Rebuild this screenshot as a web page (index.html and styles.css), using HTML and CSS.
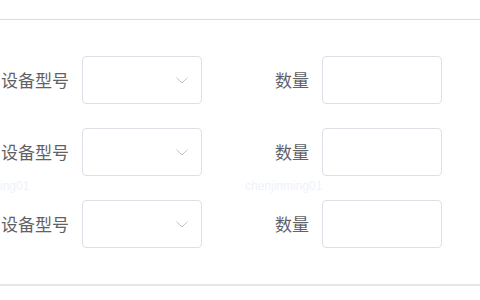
FILE: index.html
```html
<!DOCTYPE html>
<html lang="zh">
<head>
<meta charset="utf-8">
<link rel="stylesheet" href="styles.css">
</head>
<body>
<div class="page">
  <div class="header"></div>
  <div class="form">
    <div class="row">
      <div class="item"><label class="label">设备型号</label><div class="select"><svg class="arrow" width="12" height="7" viewBox="0 0 12 7"><path d="M0.5 0.5 L6 6 L11.5 0.5" fill="none" stroke="#c0c4cc" stroke-width="1"/></svg></div></div>
      <div class="item"><label class="label">数量</label><div class="input"></div></div>
    </div>
    <div class="row">
      <div class="item"><label class="label">设备型号</label><div class="select"><svg class="arrow" width="12" height="7" viewBox="0 0 12 7"><path d="M0.5 0.5 L6 6 L11.5 0.5" fill="none" stroke="#c0c4cc" stroke-width="1"/></svg></div></div>
      <div class="item"><label class="label">数量</label><div class="input"></div></div>
    </div>
    <div class="row">
      <div class="item"><label class="label">设备型号</label><div class="select"><svg class="arrow" width="12" height="7" viewBox="0 0 12 7"><path d="M0.5 0.5 L6 6 L11.5 0.5" fill="none" stroke="#c0c4cc" stroke-width="1"/></svg></div></div>
      <div class="item"><label class="label">数量</label><div class="input"></div></div>
    </div>
  </div>
  <div class="footer"></div>
  <span class="wm wm1">ing01</span>
  <span class="wm wm2">chenjinming01</span>
</div>
</body>
</html>
```
FILE: styles.css
```css
html, body {
  margin: 0;
  padding: 0;
  background: #ffffff;
}
.page {
  position: relative;
  width: 480px;
  height: 300px;
  overflow: hidden;
  font-family: "Noto Sans CJK SC", "Noto Sans", sans-serif;
}
.header {
  height: 19px;
  border-bottom: 1px solid #dcdcdc;
}
.form {
  padding: 36px 0 36px 2px;
  display: flex;
  flex-direction: column;
  gap: 24px;
}
.row {
  display: flex;
  gap: 40px;
}
.item {
  display: flex;
  align-items: center;
  width: 200px;
  height: 48px;
}
.label {
  width: 80px;
  flex: none;
  box-sizing: border-box;
  padding-right: 13px;
  display: flex;
  justify-content: flex-end;
  font-size: 17px;
  color: #5f6166;
  white-space: nowrap;
  line-height: 48px;
}
.select, .input {
  box-sizing: border-box;
  width: 120px;
  flex: none;
  height: 48px;
  border: 1px solid #dcdfe6;
  border-radius: 4px;
  background: #fff;
}
.select {
  display: flex;
  align-items: center;
  justify-content: flex-end;
  padding-right: 13px;
}
.arrow {
  display: block;
}
.footer {
  height: 2px;
  background: #e6e6e6;
}
.wm {
  position: absolute;
  top: 179px;
  font-family: "Liberation Sans", sans-serif;
  font-size: 12px;
  color: #eef2fb;
  white-space: nowrap;
}
.wm1 { left: 0; }
.wm2 { left: 245px; }
```
